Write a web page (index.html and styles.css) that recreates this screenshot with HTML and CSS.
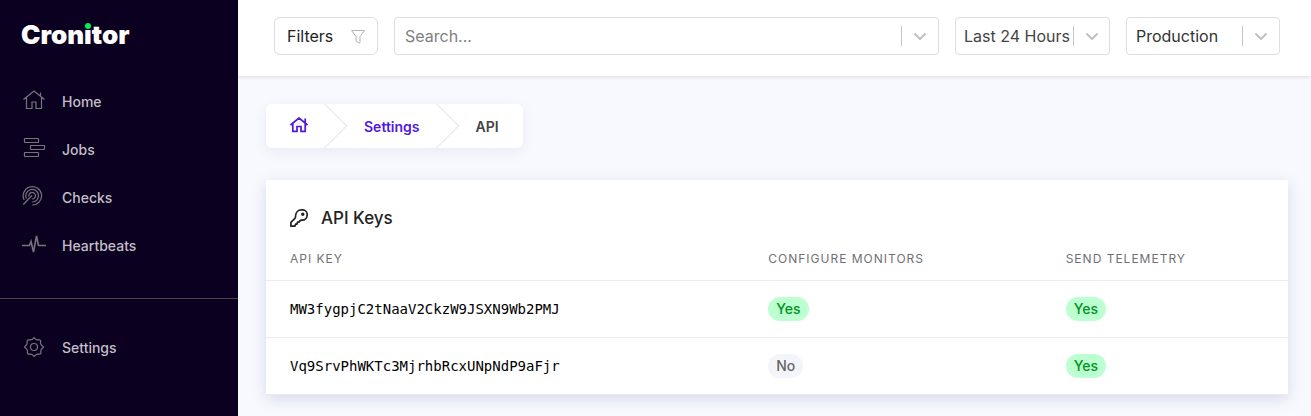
FILE: index.html
```html
<!DOCTYPE html>
<html lang="en">
<head>
<meta charset="utf-8">
<title>Cronitor – API Settings</title>
<link rel="stylesheet" href="styles.css">
</head>
<body>
<div class="app">
  <aside class="sidebar">
    <a class="logo" href="#">Cron<span class="logo-i">i</span>tor</a>
    <nav class="nav">
      <a class="nav-link" href="#">
        <svg class="nav-icon" viewBox="0 0 24 24"><path d="M1.500 10.500 12 2l10.500 8.500M18.500 3.500v4M4.500 8.500v11h5.500v-6.500h4v6.500h5.500V8.500"/></svg>
        <span>Home</span>
      </a>
      <a class="nav-link" href="#">
        <svg class="nav-icon" viewBox="0 0 24 24"><rect x="2.500" y="1.500" width="14" height="4" rx=".5"/><rect x="8.500" y="8.500" width="14" height="4" rx=".5"/><rect x="2.500" y="15.500" width="14" height="4" rx=".5"/></svg>
        <span>Jobs</span>
      </a>
      <a class="nav-link" href="#">
        <svg class="nav-icon" viewBox="0 0 24 24"><path d="M1.300 19.500 10 10.500M2.200 15A9.200 9.200 0 1 1 10.200 20M4.500 13.500A6.300 6.300 0 1 1 10.200 17M7 11.500A3.300 3.300 0 1 1 10.200 14"/></svg>
        <span>Checks</span>
      </a>
      <a class="nav-link" href="#">
        <svg class="nav-icon bold" viewBox="0 0 24 24"><path d="M0 12.500h7.500l1.500-4 2.500 10.500L14.500 3l2 9.500h7.500"/></svg>
        <span>Heartbeats</span>
      </a>
    </nav>
    <nav class="nav nav-secondary">
      <a class="nav-link" href="#">
        <svg class="nav-icon" viewBox="0 0 24 24"><circle cx="12" cy="12" r="3.500"/><path d="M10.300 4.300 12 2.500l1.700 1.800 1.500.6 2.500-.1.900.9-.1 2.500.6 1.500L21.500 12l-2.100 2.300-.6 1.500.1 2.500-.9.900-2.500-.1-1.500.6L12 21.500l-1.700-1.800-1.500-.6-2.500.1-.9-.9.100-2.500-.6-1.500L2.500 12l2.100-2.300.6-1.500-.1-2.500.9-.9 2.500.1z"/></svg>
        <span>Settings</span>
      </a>
    </nav>
  </aside>

  <div class="content">
    <header class="toolbar">
      <button class="filters" type="button">Filters
        <svg class="funnel" viewBox="0 0 16 16"><path d="M1.500 2.500h13L10 8.500v6l-1 .5-3-2V8.500z"/></svg>
      </button>
      <div class="field search">
        <input class="control" type="text" placeholder="Search..." aria-label="Search">
        <span class="indicator"><svg viewBox="0 0 20 20"><path d="m5 8 5 5 5-5"/></svg></span>
      </div>
      <div class="field period">
        <select class="control" aria-label="Time range"><option>Last 24 Hours</option></select>
        <span class="indicator"><svg viewBox="0 0 20 20"><path d="m5 8 5 5 5-5"/></svg></span>
      </div>
      <div class="field environment">
        <select class="control" aria-label="Environment"><option>Production</option></select>
        <span class="indicator"><svg viewBox="0 0 20 20"><path d="m5 8 5 5 5-5"/></svg></span>
      </div>
    </header>

    <main class="page">
      <nav class="breadcrumb" aria-label="Breadcrumb">
        <a class="crumb" href="#" aria-label="Home"><svg class="crumb-home" viewBox="0 0 18 18"><path d="M.5 8 9 1l8.500 7M15.200 1.500v4M2.800 6.500v7.800h4.200v-4.800h4v4.800h4.200V6.500"/></svg></a>
        <svg class="crumb-sep" viewBox="0 0 24 44"><path d="m.5 0 22 22-22 22"/></svg>
        <a class="crumb" href="#">Settings</a>
        <svg class="crumb-sep" viewBox="0 0 24 44"><path d="m.5 0 22 22-22 22"/></svg>
        <span class="crumb current">API</span>
      </nav>

      <section class="card">
        <h1 class="card-title">
          <svg class="key" viewBox="0 0 18 18"><path d="M11.300.9h1.500c2.400 0 4.400 2 4.400 4.600 0 3.300-2.200 5.700-5.200 5.700-1.300 0-2 .2-2.300.8l-.6 1.200H7.500l-.6 2H5.500l-.6 2H.9v-3.800l3.800-3.700c.9-.9.800-1.500.9-3C5.800 3.200 8.200.9 11.300.9z"/><circle cx="12.800" cy="5.200" r=".9"/></svg>
          API Keys
        </h1>
        <table class="keys">
          <thead>
            <tr><th class="col-key">API Key</th><th class="col-configure">Configure Monitors</th><th>Send Telemetry</th></tr>
          </thead>
          <tbody>
            <tr><td class="token">MW3fygpjC2tNaaV2CkzW9JSXN9Wb2PMJ</td><td><span class="badge yes">Yes</span></td><td><span class="badge yes">Yes</span></td></tr>
            <tr><td class="token">Vq9SrvPhWKTc3MjrhbRcxUNpNdP9aFjr</td><td><span class="badge no">No</span></td><td><span class="badge yes">Yes</span></td></tr>
          </tbody>
        </table>
      </section>
    </main>
  </div>
</div>
</body>
</html>
```
FILE: styles.css
```css
* { box-sizing: border-box; }

body {
  margin: 0;
  background: #f8f9fe;
  color: #222;
  font-family: Inter, "Liberation Sans", sans-serif;
  font-size: 14px;
}

a { color: inherit; text-decoration: none; }
svg { display: block; fill: none; stroke: currentColor; }

.app { display: flex; min-height: 100vh; }

.sidebar {
  flex: 0 0 238px;
  padding-top: 19px;
  background: #0b0020;
  color: #c2bfc6;
}

.logo {
  display: block;
  padding-left: 21px;
  color: #fff;
  font-size: 26px;
  font-weight: 900;
  line-height: 32px;
}

.logo-i { position: relative; }

.logo-i::before {
  content: "";
  position: absolute;
  top: 4px;
  left: 1px;
  width: 6px;
  height: 6px;
  border-radius: 50%;
  background: #00f050;
  box-shadow: 0 0 0 1px #0b0020;
}

.nav { padding: 26px 0 29px 22px; }
.nav-secondary { border-top: 1px solid #464646; padding-top: 24px; }

.nav-link {
  display: flex;
  align-items: center;
  gap: 16px;
  height: 48px;
  font-size: 14px;
  font-weight: 500;
}

.nav-icon { width: 24px; height: 24px; color: #77747c; stroke-width: 1.2; }
.nav-icon.bold { stroke-width: 1.6; }

.content { flex: 1; min-width: 0; }

.toolbar {
  display: flex;
  gap: 16px;
  padding: 17px 31px 21px 36px;
  background: #fff;
  box-shadow: 0 1px 4px #0000001f;
}

.filters,
.field {
  height: 38px;
  border: 1px solid #dedee0;
  border-radius: 6px;
  background: #fff;
}

.filters {
  display: flex;
  align-items: center;
  justify-content: space-between;
  flex: 0 0 104px;
  padding: 0 11px 0 12px;
  color: #222;
  font: 16px Inter, sans-serif;
}

.funnel { width: 16px; height: 16px; color: #b4b4b8; }

.field { display: flex; align-items: center; border-radius: 4px; }
.search { flex: 1; }
.period { flex: 0 0 155px; }
.environment { flex: 0 0 154px; }

.control {
  flex: 1;
  min-width: 0;
  height: 36px;
  padding: 0 0 0 8px;
  border: 0;
  background: none;
  color: #444;
  font: 16px Inter, sans-serif;
  appearance: none;
}

.search .control { padding-left: 10px; }
.environment .control { padding-left: 9px; color: #333; }
.control::placeholder { color: #808080; opacity: 1; }

.indicator {
  display: flex;
  align-items: center;
  justify-content: center;
  width: 37px;
  height: 20px;
  border-left: 1px solid #c4c4c4;
  color: #c0c0c3;
}

.period .indicator { width: 36px; }

.indicator svg { width: 20px; height: 20px; stroke-width: 2; stroke-linecap: round; stroke-linejoin: round; }

.page { padding: 28px 23px 22px 28px; }

.breadcrumb {
  display: inline-flex;
  align-items: center;
  gap: 16px;
  height: 44px;
  padding: 0 24px;
  border-radius: 6px;
  background: #fff;
  box-shadow: 0 4px 14px #20205010;
  vertical-align: top;
}

.crumb { color: #5119e0; font-weight: 600; }
.crumb.current { color: #444; }
.crumb-home { width: 18px; height: 18px; stroke-width: 1.7; }
.crumb-sep { width: 24px; height: 44px; color: #dcdce0; }

.card {
  margin-top: 32px;
  background: #fff;
  box-shadow: 0 4px 14px #3040802b;
}

.card-title {
  display: flex;
  align-items: center;
  gap: 13px;
  margin: 0;
  padding: 26px 24px 8px;
  color: #222;
  font-size: 17px;
  font-weight: 500;
  line-height: 24px;
}

.key { width: 18px; height: 18px; stroke-width: 1.7; stroke-linejoin: round; }

.keys { width: 100%; border-collapse: collapse; table-layout: fixed; }

.keys th,
.keys td {
  padding: 0 24px;
  border-bottom: 1px solid #ebebed;
  text-align: left;
}

.keys th {
  height: 42px;
  color: #707074;
  font-size: 12px;
  font-weight: 400;
  letter-spacing: 1px;
  text-transform: uppercase;
}

.keys td { height: 57px; }
.col-key { width: 46.8%; }
.col-configure { width: 29.1%; }

.keys .token {
  color: #000;
  font-family: "DejaVu Sans Mono", monospace;
  font-size: 14px;
}

.badge {
  display: inline-block;
  padding: 0 8px;
  border-radius: 12px;
  font-weight: 500;
  line-height: 24px;
}

.yes { background: #bcffd0; color: #00931f; }
.no { background: #f4f5fa; color: #666; }
```
